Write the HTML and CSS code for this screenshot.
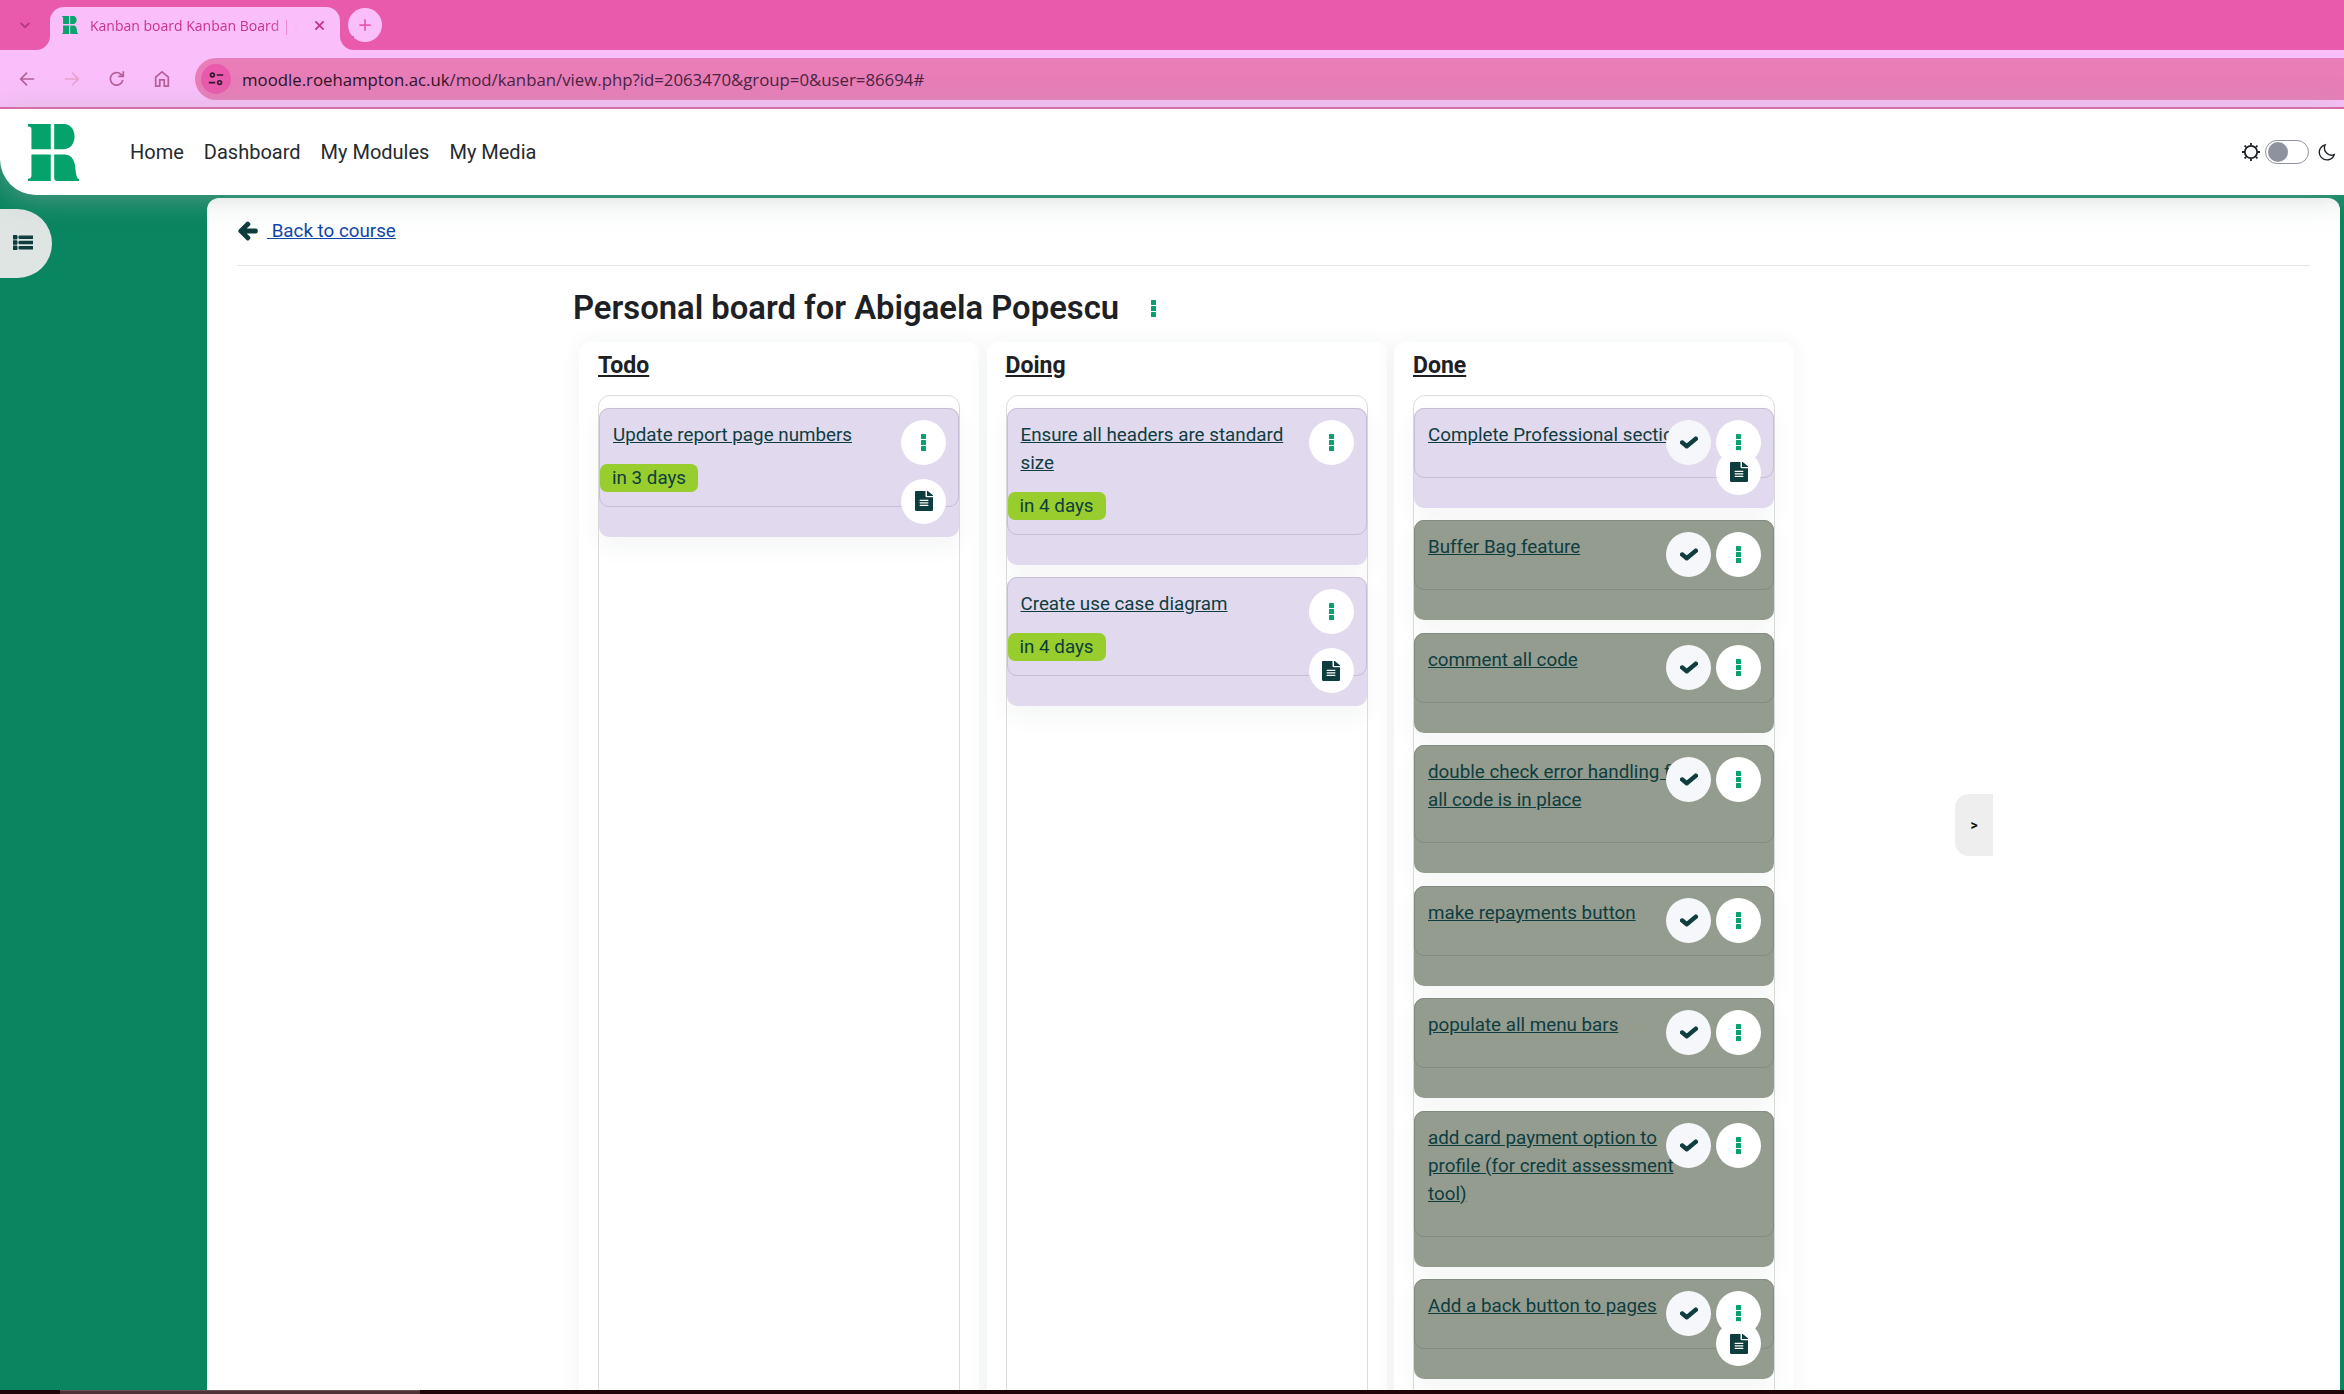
FILE: index.html
```html
<!DOCTYPE html>
<html lang="en">
<head>
<meta charset="utf-8">
<title>Kanban board</title>
<link rel="stylesheet" href="styles.css">
</head>
<body>
<svg class="defs" width="0" height="0" aria-hidden="true">
  <symbol id="i-check" viewBox="0 0 512 512" preserveAspectRatio="none"><path d="M173.898 439.404l-166.4-166.4c-9.997-9.997-9.997-26.206 0-36.204l36.203-36.204c9.997-9.998 26.207-9.998 36.204 0L192 312.69 432.095 72.596c9.997-9.997 26.207-9.997 36.204 0l36.203 36.204c9.997 9.997 9.997 26.206 0 36.204l-294.4 294.401c-9.998 9.997-26.207 9.997-36.204-.001z"/></symbol>
  <symbol id="i-file" viewBox="0 0 384 512" preserveAspectRatio="none"><path d="M224 136V0H24C10.7 0 0 10.7 0 24v464c0 13.3 10.7 24 24 24h336c13.3 0 24-10.7 24-24V160H248c-13.2 0-24-10.8-24-24zm64 236c0 6.6-5.4 12-12 12H108c-6.6 0-12-5.4-12-12v-8c0-6.6 5.4-12 12-12h168c6.6 0 12 5.4 12 12v8zm0-64c0 6.6-5.4 12-12 12H108c-6.6 0-12-5.4-12-12v-8c0-6.6 5.4-12 12-12h168c6.6 0 12 5.4 12 12v8zm0-72v8c0 6.6-5.4 12-12 12H108c-6.6 0-12-5.4-12-12v-8c0-6.6 5.4-12 12-12h168c6.6 0 12 5.4 12 12v8zm96-114.1v6.1H256V0h6.1c6.4 0 12.5 2.5 17 7l97.9 98c4.5 4.5 7 10.6 7 16.9z"/></symbol>
  <symbol id="i-dots" viewBox="0 0 5 17"><rect x="0" y="0" width="5" height="5" rx=".6"/><rect x="0" y="6" width="5" height="5" rx=".6"/><rect x="0" y="12" width="5" height="5" rx=".6"/></symbol>
  <symbol id="i-logo" viewBox="27 30 148 163" preserveAspectRatio="none"><path d="M27 30H93V102H37V44C37 38 32 38 27 37Z"/><path d="M37 117H93V193H27V187C33 186 37 184 37 178Z"/><path d="M103 30H132C150 30 162 46 162 66C162 86 150 102 132 102H103Z"/><path d="M103 117H132C150 117 162 130 164 152C166 172 168 186 175 187V193H112C106 193 103 190 103 184Z"/></symbol>
</svg>

<div class="tabstrip">
  <span class="tab-menu"><svg class="tab-chev" viewBox="0 0 16 16"><path d="M3 5.5l5 5 5-5"/></svg></span>
  <div class="tab">
    <svg class="favicon"><use href="#i-logo"/></svg>
    <span class="tab-title">Kanban board Kanban Board | U</span>
    <svg class="tab-close" viewBox="0 0 12 12"><path d="M1.5 1.5l9 9M10.5 1.5l-9 9"/></svg>
  </div>
  <span class="new-tab"><svg viewBox="0 0 16 16"><path d="M8 1.5v13M1.5 8h13"/></svg></span>
</div>

<div class="toolbar">
  <svg class="tool" viewBox="0 0 20 20"><path d="M18 10H3M10 3l-7 7 7 7"/></svg>
  <svg class="tool tool-off" viewBox="0 0 20 20"><path d="M2 10h15M10 3l7 7-7 7"/></svg>
  <svg class="tool" viewBox="0 0 20 20"><path d="M16.5 11a7 7 0 1 1-2-6.2L17 7M17 1.5V7h-5.5"/></svg>
  <svg class="tool" viewBox="0 0 20 20"><path d="M3 18V8l7-6 7 6v10h-4.5v-7h-5v7Z"/></svg>
  <div class="omnibox">
    <span class="site-info"><svg viewBox="0 0 20 20"><circle cx="5.5" cy="5" r="2.4"/><path d="M11 5h8M1 14.5h8"/><circle cx="14.5" cy="14.5" r="2.4"/></svg></span>
    <span class="url"><b>moodle.roehampton.ac.uk</b>/mod/kanban/view.php?id=2063470&amp;group=0&amp;user=86694#</span>
  </div>
</div>

<header class="site-header">
  <svg class="logo"><use href="#i-logo"/></svg>
  <nav class="nav">
    <a>Home</a>
    <a>Dashboard</a>
    <a>My Modules</a>
    <a>My Media</a>
  </nav>
  <div class="mode">
    <svg class="sun" viewBox="0 0 20 20"><circle cx="10" cy="10" r="6.2"/><path d="M10 1v2M10 17v2M1 10h2M17 10h2M3.600 3.600L5 5M15 15l1.400 1.400M3.600 16.400L5 15M15 5l1.400-1.400"/></svg>
    <span class="switch"><span class="knob"></span></span>
    <svg class="moon" viewBox="0 0 20 20"><path d="M8 2a8.500 8.500 0 1 0 10 11A8 8 0 0 1 8 2Z"/></svg>
  </div>
</header>

<div class="workspace">
  <aside class="side">
    <span class="drawer-btn"><svg viewBox="0 0 512 512" preserveAspectRatio="none"><path d="M80 368H16a16 16 0 0 0-16 16v64a16 16 0 0 0 16 16h64a16 16 0 0 0 16-16v-64a16 16 0 0 0-16-16zm0-320H16A16 16 0 0 0 0 64v64a16 16 0 0 0 16 16h64a16 16 0 0 0 16-16V64a16 16 0 0 0-16-16zm0 160H16a16 16 0 0 0-16 16v64a16 16 0 0 0 16 16h64a16 16 0 0 0 16-16v-64a16 16 0 0 0-16-16zm416 176H176a16 16 0 0 0-16 16v32a16 16 0 0 0 16 16h320a16 16 0 0 0 16-16v-32a16 16 0 0 0-16-16zm0-320H176a16 16 0 0 0-16 16v32a16 16 0 0 0 16 16h320a16 16 0 0 0 16-16V80a16 16 0 0 0-16-16zm0 160H176a16 16 0 0 0-16 16v32a16 16 0 0 0 16 16h320a16 16 0 0 0 16-16v-32a16 16 0 0 0-16-16z"/></svg></span>
  </aside>
  <main class="main">
    <div class="back">
      <svg class="back-arrow" viewBox="-20 -20 488 552"><path d="M257.500 445.100l-22.200 22.200c-9.400 9.400-24.600 9.400-33.900 0L7 273c-9.400-9.400-9.400-24.600 0-33.900L201.400 44.700c9.400-9.400 24.600-9.400 33.900 0l22.200 22.200c9.500 9.500 9.300 25-.4 34.300L136.600 216H424c13.300 0 24 10.700 24 24v32c0 13.300-10.700 24-24 24H136.600l120.500 114.800c9.800 9.300 10 24.800.4 34.300z"/></svg>
      <a class="back-link">&nbsp;Back to course</a>
    </div>
    <div class="rule"></div>
    <section class="board">
      <div class="board-head">
        <h1>Personal board for Abigaela Popescu</h1>
        <svg class="dots"><use href="#i-dots"/></svg>
      </div>
      <div class="columns">
        <div class="column">
          <h2>Todo</h2>
          <div class="list">
            <article class="card">
              <div class="card-body">
                <a class="card-title">Update report page numbers</a>
                <div class="due">in 3 days</div>
              </div>
              <span class="btn btn-menu"><svg class="dots"><use href="#i-dots"/></svg></span>
              <span class="btn btn-doc"><svg class="file"><use href="#i-file"/></svg></span>
            </article>
          </div>
        </div>
        <div class="column">
          <h2>Doing</h2>
          <div class="list">
            <article class="card">
              <div class="card-body">
                <a class="card-title">Ensure all headers are standard size</a>
                <div class="due">in 4 days</div>
              </div>
              <span class="btn btn-menu"><svg class="dots"><use href="#i-dots"/></svg></span>
            </article>
            <article class="card">
              <div class="card-body">
                <a class="card-title">Create use case diagram</a>
                <div class="due">in 4 days</div>
              </div>
              <span class="btn btn-menu"><svg class="dots"><use href="#i-dots"/></svg></span>
              <span class="btn btn-doc"><svg class="file"><use href="#i-file"/></svg></span>
            </article>
          </div>
        </div>
        <div class="column">
          <h2>Done</h2>
          <div class="list">
            <article class="card">
              <div class="card-body"><a class="card-title">Complete Professional section</a></div>
              <span class="btn btn-check"><svg class="check"><use href="#i-check"/></svg></span>
              <span class="btn btn-menu"><svg class="dots"><use href="#i-dots"/></svg></span>
              <span class="btn btn-doc"><svg class="file"><use href="#i-file"/></svg></span>
            </article>
            <article class="card card-done">
              <div class="card-body"><a class="card-title">Buffer Bag feature</a></div>
              <span class="btn btn-check"><svg class="check"><use href="#i-check"/></svg></span>
              <span class="btn btn-menu"><svg class="dots"><use href="#i-dots"/></svg></span>
            </article>
            <article class="card card-done">
              <div class="card-body"><a class="card-title">comment all code</a></div>
              <span class="btn btn-check"><svg class="check"><use href="#i-check"/></svg></span>
              <span class="btn btn-menu"><svg class="dots"><use href="#i-dots"/></svg></span>
            </article>
            <article class="card card-done">
              <div class="card-body"><a class="card-title">double check error handling for all code is in place</a></div>
              <span class="btn btn-check"><svg class="check"><use href="#i-check"/></svg></span>
              <span class="btn btn-menu"><svg class="dots"><use href="#i-dots"/></svg></span>
            </article>
            <article class="card card-done">
              <div class="card-body"><a class="card-title">make repayments button</a></div>
              <span class="btn btn-check"><svg class="check"><use href="#i-check"/></svg></span>
              <span class="btn btn-menu"><svg class="dots"><use href="#i-dots"/></svg></span>
            </article>
            <article class="card card-done">
              <div class="card-body"><a class="card-title">populate all menu bars</a></div>
              <span class="btn btn-check"><svg class="check"><use href="#i-check"/></svg></span>
              <span class="btn btn-menu"><svg class="dots"><use href="#i-dots"/></svg></span>
            </article>
            <article class="card card-done">
              <div class="card-body"><a class="card-title">add card payment option to profile (for credit assessment tool)</a></div>
              <span class="btn btn-check"><svg class="check"><use href="#i-check"/></svg></span>
              <span class="btn btn-menu"><svg class="dots"><use href="#i-dots"/></svg></span>
            </article>
            <article class="card card-done">
              <div class="card-body"><a class="card-title">Add a back button to pages</a></div>
              <span class="btn btn-check"><svg class="check"><use href="#i-check"/></svg></span>
              <span class="btn btn-menu"><svg class="dots"><use href="#i-dots"/></svg></span>
              <span class="btn btn-doc"><svg class="file"><use href="#i-file"/></svg></span>
            </article>
          </div>
        </div>
      </div>
    </section>
    <span class="panel-toggle">&gt;</span>
  </main>
</div>

<div class="taskbar"><span class="taskbar-item"></span></div>
</body>
</html>
```
FILE: styles.css
```css
* { box-sizing: border-box; }
html, body { height: 100%; }
body {
  margin: 0;
  height: 100vh;
  overflow: hidden;
  display: flex;
  flex-direction: column;
  background: #09855f;
  font-family: Roboto, "Liberation Sans", sans-serif;
  font-size: 18.8px;
  color: #1d2125;
}
.defs { position: absolute; }

/* browser chrome */
.tabstrip {
  height: 50px;
  flex: none;
  background: #e95aac;
  display: flex;
  align-items: flex-end;
}
.tab-menu {
  width: 50px;
  height: 50px;
  display: flex;
  align-items: center;
  justify-content: center;
}
.tab-chev { width: 14px; height: 14px; fill: none; stroke: #b53a86; stroke-width: 2.2; }
.tab {
  position: relative;
  width: 290px;
  height: 43px;
  background: #fabffb;
  border-radius: 14px 14px 0 0;
  display: flex;
  align-items: center;
  padding: 0 12px 7px;
}
.tab::before, .tab::after {
  content: "";
  position: absolute;
  bottom: 0;
  width: 14px;
  height: 14px;
  background: #e95aac;
}
.tab::before { left: -14px; border-bottom-right-radius: 14px; box-shadow: 7px 7px 0 7px #fabffb; clip-path: inset(0); }
.tab::after { right: -14px; border-bottom-left-radius: 14px; box-shadow: -7px 7px 0 7px #fabffb; clip-path: inset(0); }
.favicon { width: 16px; height: 18px; flex: none; fill: #0aa36f; }
.tab-title {
  margin-left: 12px;
  width: 212px;
  flex: none;
  white-space: nowrap;
  font-family: "Open Sans", sans-serif;
  font-size: 14px;
  color: #c8328f;
  -webkit-mask-image: linear-gradient(90deg, #000 85%, transparent 98%);
  mask-image: linear-gradient(90deg, #000 85%, transparent 98%);
}
.tab-close { width: 11px; height: 11px; margin-left: 12px; fill: none; stroke: #c8328f; stroke-width: 2; flex: none; }
.new-tab {
  width: 34px;
  height: 34px;
  margin: 0 0 8px 8px;
  border-radius: 50%;
  background: #fabffb;
  display: flex;
  align-items: center;
  justify-content: center;
}
.new-tab svg { width: 14px; height: 14px; fill: none; stroke: #e95aac; stroke-width: 2; }
.toolbar {
  height: 59px;
  flex: none;
  background: #fabffb;
  border-bottom: 2px solid #e15fa9;
  display: flex;
  align-items: center;
  padding-left: 18px;
  gap: 27px;
}
.tool { width: 18px; height: 18px; fill: none; stroke: #b45f97; stroke-width: 1.9; flex: none; }
.tool-off { stroke: #e8a3d0; }
.omnibox {
  flex: 1;
  height: 42px;
  margin-left: -3px;
  background: #e87db8;
  border-radius: 21px 0 0 21px;
  display: flex;
  align-items: center;
  padding-left: 6px;
}
.site-info {
  width: 30px;
  height: 30px;
  border-radius: 50%;
  background: #e95aac;
  display: flex;
  align-items: center;
  justify-content: center;
}
.site-info svg { width: 16px; height: 16px; fill: none; stroke: #33172c; stroke-width: 2; }
.url {
  margin: 1px 0 0 11px;
  font-family: "Open Sans", sans-serif;
  font-size: 16.8px;
  color: #4a2340;
  white-space: nowrap;
}
.url b { font-weight: 400; color: #2c1227; }

/* site header */
.site-header {
  height: 86px;
  flex: none;
  position: relative;
  z-index: 2;
  background: #fff;
  border-bottom-left-radius: 36px;
  box-shadow: 0 2px 30px rgba(170, 180, 178, .5);
  display: flex;
  align-items: center;
  padding-left: 28px;
}
.logo { width: 51px; height: 57px; fill: #05a26b; flex: none; }
.nav { display: flex; margin-left: 51px; gap: 20px; font-size: 20px; color: #262a2e; }
.mode { margin-left: auto; display: flex; align-items: center; }
.sun { width: 20px; height: 20px; fill: none; stroke: #1d2125; stroke-width: 1.8; margin-right: 4px; }
.switch {
  width: 44px;
  height: 24px;
  border: 1px solid #8e929f;
  border-radius: 12px;
  display: flex;
  align-items: center;
  padding-left: 2px;
}
.knob { width: 20px; height: 20px; border-radius: 50%; background: #8e929f; }
.moon { width: 18px; height: 18px; margin: 0 8px 0 9px; fill: none; stroke: #1d2125; stroke-width: 1.5; }

/* page */
.workspace {
  flex: 1;
  min-height: 0;
  display: flex;
  padding: 3px 4px 0 0;
}
.side { width: 207px; flex: none; padding-top: 11px; }
.drawer-btn {
  width: 52px;
  height: 69px;
  background: #dfe5e3;
  border-radius: 0 35px 35px 0;
  display: flex;
  align-items: center;
  padding: 0 0 3px 13px;
}
.drawer-btn svg { width: 20px; height: 17px; fill: #0e3d3f; stroke: #0e3d3f; stroke-width: 40; }
.main {
  flex: 1;
  min-width: 0;
  position: relative;
  overflow: hidden;
  background: #fff;
  border-radius: 12px 12px 0 0;
  padding: 19px 30px 0;
}
.back { display: flex; align-items: center; height: 28px; padding-left: 1px; }
.back-arrow { width: 20px; height: 22px; fill: #0e3d3f; stroke: #0e3d3f; stroke-width: 40; flex: none; }
.back-link { margin-left: 9px; color: #0f47a8; text-decoration: underline; }
.rule { height: 1px; background: #e3e5e5; margin-top: 20px; }
.board { margin-left: 336px; }
.board-head { display: flex; align-items: center; margin-top: 23px; height: 38px; }
h1 { margin: 0; font-size: 32.8px; font-weight: 600; line-height: 38px; }
.board-head .dots { margin-left: 32px; }
.dots { width: 5px; height: 17px; fill: #08a06f; display: block; }
.columns {
  display: grid;
  grid-template-columns: repeat(3, 400px);
  gap: 7.5px;
  margin: 15px 0 0 6px;
}
.column {
  display: flex;
  flex-direction: column;
  background: #fff;
  border-radius: 12px;
  padding: 9px 19px 0;
  box-shadow: 0 0 22px rgba(40, 50, 50, .06);
}
h2 {
  margin: 0;
  font-size: 23px;
  font-weight: 700;
  line-height: 30px;
  text-decoration: underline;
}
.list {
  flex: 1;
  margin-top: 14px;
  border: 1px solid #dcdcdc;
  border-radius: 12px;
  padding: 11.5px 0 40px;
  display: flex;
  flex-direction: column;
  gap: 12.5px;
}
.card {
  position: relative;
  background: #e1d9ed;
  border-radius: 10px;
  padding-bottom: 30px;
  box-shadow: 0 10px 24px rgba(40, 50, 50, .05);
}
.card-body {
  border: 1px solid #c6bdd6;
  border-radius: 10px;
  padding: 12px 75px 13px 13px;
}
.card-title {
  display: block;
  line-height: 28px;
  margin-bottom: 15px;
  color: #0e3d3f;
  text-decoration: underline;
}
.due {
  width: 98px;
  height: 28px;
  margin: 0 0 1px -13px;
  padding-left: 12px;
  line-height: 28px;
  background: #97cd2c;
  border-radius: 7px;
  color: #0e3d3f;
}
.card-done { background: #949b8f; }
.card-done .card-body { border-color: #838a7f; }
.btn {
  position: absolute;
  z-index: 1;
  right: 13px;
  top: 12px;
  width: 45px;
  height: 45px;
  border-radius: 50%;
  background: #fff;
  display: flex;
  align-items: center;
  justify-content: center;
}
.btn-check { right: 63px; background: #f5f7fa; }
.btn-doc { top: auto; bottom: 13px; z-index: 2; }
.check { width: 18px; height: 15px; fill: #0e3d3f; stroke: #0e3d3f; stroke-width: 36; overflow: visible; }
.file { width: 18px; height: 20px; fill: #0e3d3f; }
.panel-toggle {
  position: absolute;
  left: 1748px;
  top: 596px;
  width: 38px;
  height: 62px;
  background: #eee;
  border-radius: 14px 0 0 14px;
  display: flex;
  align-items: center;
  justify-content: center;
  font-size: 14px;
  font-weight: 700;
  color: #111;
}
.taskbar { height: 4px; flex: none; background: #1f0508; padding-left: 60px; position: relative; z-index: 3; }
.taskbar-item { display: block; width: 360px; height: 4px; background: #4e3238; border-top: 1px solid #6c5257; }
```
